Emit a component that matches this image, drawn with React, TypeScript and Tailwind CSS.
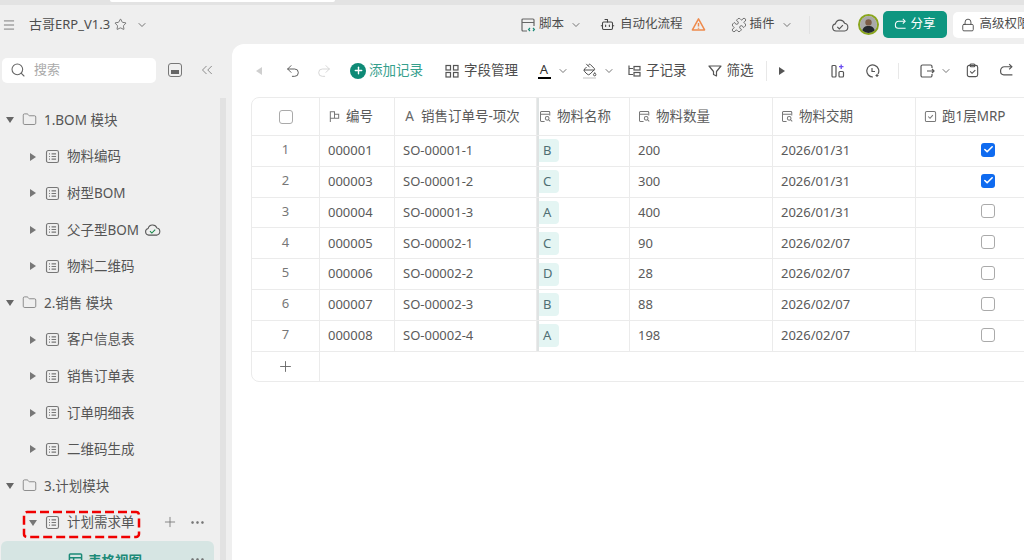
import type { ReactNode } from "react";
import {
  Bot,
  Check,
  ChevronDown,
  ChevronsLeft,
  Folder,
  Lock,
  Menu,
  MoreHorizontal,
  PaintBucket,
  Plus,
  Puzzle,
  Redo2,
  Search,
  Star,
  Undo2,
} from "lucide-react";

const FONT = "font-['Noto_Sans','Noto_Sans_CJK_SC',sans-serif]";

function Tri({ dir = "right", className = "" }: { dir?: "right" | "down" | "left"; className?: string }) {
  const points = dir === "right" ? "2,1 8,5 2,9" : dir === "down" ? "1,2 9,2 5,8" : "8,1 2,5 8,9";
  return (
    <svg viewBox="0 0 10 10" className={`size-[10px] shrink-0 fill-current ${className}`}>
      <polygon points={points} />
    </svg>
  );
}

function SheetIcon({ className = "" }: { className?: string }) {
  return (
    <svg viewBox="0 0 16 16" fill="none" stroke="currentColor" strokeWidth="1.2" className={`size-[15px] shrink-0 ${className}`}>
      <rect x="1.6" y="1.6" width="12.8" height="12.8" rx="2" />
      <path d="M4.3 5.2h1M4.3 8h1M4.3 10.8h1M7 5.2h4.8M7 8h4.8M7 10.8h4.8" />
    </svg>
  );
}

function LookupIcon() {
  return (
    <svg viewBox="0 0 14 14" fill="none" stroke="currentColor" strokeWidth="1.1" className="size-[13px] shrink-0 text-[#777]">
      <path d="M6 12.4H2.6a1 1 0 0 1-1-1V2.6a1 1 0 0 1 1-1h8a1 1 0 0 1 1 1V6" />
      <path d="M1.8 4.6h9.4" />
      <circle cx="8.8" cy="9" r="2" />
      <path d="M10.3 10.5l1.8 1.8" />
    </svg>
  );
}

function CloudCheck({ className = "", check = "#555" }: { className?: string; check?: string }) {
  return (
    <svg viewBox="0 0 18 16" fill="none" stroke="currentColor" strokeWidth="1.1" className={`shrink-0 ${className}`}>
      <path d="M5 14a3.6 3.6 0 0 1-.6-7.1 4.8 4.8 0 0 1 9.200-.6A3.900 3.900 0 0 1 13.500 14z" strokeLinejoin="round" />
      <path d="M6.300 9.800l2 2 3.600-3.600" stroke={check} strokeWidth="1.200" />
    </svg>
  );
}

function Chev({ className = "" }: { className?: string }) {
  return <ChevronDown className={`size-[12px] shrink-0 text-[#666] ${className}`} strokeWidth={1.8} />;
}

function ShareIcon({ className = "size-[13px]" }: { className?: string }) {
  return (
    <svg viewBox="0 0 14 14" fill="none" stroke="currentColor" strokeWidth="1.1" className={`shrink-0 ${className}`}>
      <path d="M11.500 3.500H5A3.500 3.500 0 0 0 1.500 7v1a3 3 0 0 0 3 3h8" />
      <path d="M9.500 1 12 3.500 9.500 6" />
    </svg>
  );
}

function TreeRow({ label, group, open, badge }: { label: string; group?: boolean; open?: boolean; badge?: boolean }) {
  return (
    <div className="flex h-[36.6px] items-center text-[13.5px] text-[#555]">
      {group ? (
        <>
          <Tri dir="down" className="ml-[5px] text-[#666]" />
          <Folder className="ml-[7px] size-[15px] shrink-0 text-[#777]" strokeWidth={1.3} />
          <span className="ml-[7px]">{label}</span>
        </>
      ) : (
        <>
          <Tri dir={open ? "down" : "right"} className="ml-[28px] text-[#777]" />
          <SheetIcon className="ml-[7px] text-[#777]" />
          <span className="ml-[7px]">{label}</span>
          {badge && <CloudCheck className="ml-[5px] h-[15px] w-[17px] text-[#555]" check="#1c8a4c" />}
        </>
      )}
    </div>
  );
}

function Sidebar() {
  return (
    <aside className="relative flex w-[232px] shrink-0 flex-col">
      <div className="flex h-[52px] shrink-0 items-center pl-[2px]">
        <div className="flex h-[25px] w-[154px] items-center rounded-[5px] bg-white pl-[8px] text-[13px] text-[#aaa]">
          <Search className="size-[16px] text-[#666]" strokeWidth={1.6} />
          <span className="ml-[8px]">搜索</span>
        </div>
        <span className="ml-[12px] flex size-[14px] items-end justify-center rounded-[3px] border border-[#777] pb-[2px]">
          <span className="h-[4px] w-[8px] bg-[#666]" />
        </span>
        <ChevronsLeft className="ml-[16px] size-[18px] text-[#777]" strokeWidth={1.1} />
      </div>
      <div className="shrink-0 pt-[5.7px]">
        <TreeRow group label="1.BOM 模块" />
        <TreeRow label="物料编码" />
        <TreeRow label="树型BOM" />
        <TreeRow label="父子型BOM" badge />
        <TreeRow label="物料二维码" />
        <TreeRow group label="2.销售 模块" />
        <TreeRow label="客户信息表" />
        <TreeRow label="销售订单表" />
        <TreeRow label="订单明细表" />
        <TreeRow label="二维码生成" />
        <TreeRow group label="3.计划模块" />
        <div className="relative">
          <TreeRow open label="计划需求单" />
          <svg width="119" height="29" className="absolute left-[22px] top-[6px] overflow-visible">
            <rect x="2" y="2" width="115" height="25" rx="3" fill="none" stroke="#f00000" strokeWidth="2.5" strokeDasharray="9 4" />
          </svg>
          <Plus className="absolute left-[162px] top-[10px] size-[16px] text-[#777]" strokeWidth={1.3} />
          <MoreHorizontal className="absolute left-[189px] top-[10px] size-[17px] text-[#666]" strokeWidth={1.5} />
        </div>
      </div>
      <div className="ml-[1px] flex h-[36px] w-[213px] shrink-0 items-start rounded-[6px] bg-[#d6e5e3] pl-[67px] pt-[10px] text-[13.5px] font-bold text-[#1c8a78]">
        <svg viewBox="0 0 16 16" fill="none" stroke="currentColor" strokeWidth="1.6" className="mt-[1px] size-[15px] shrink-0">
          <rect x="1.5" y="2" width="13" height="12" rx="1" />
          <path d="M1.5 6h13M6 6v8" />
        </svg>
        <span className="ml-[5px]">表格视图</span>
        <MoreHorizontal className="ml-[47px] size-[17px] text-[#666]" strokeWidth={1.5} />
      </div>
      <div className="absolute bottom-0 left-[220px] top-[54px] w-[6px] bg-[#e2e2e2]" />
    </aside>
  );
}

function ToolItem({ icon, label, className = "" }: { icon: ReactNode; label: string; className?: string }) {
  return (
    <span className={`flex items-center gap-[5px] whitespace-nowrap ${className}`}>
      {icon}
      <span>{label}</span>
    </span>
  );
}

function Header() {
  return (
    <header className="flex h-[39px] shrink-0 items-center whitespace-nowrap text-[12.5px] text-[#4d4d4d]">
      <Menu className="ml-[2px] size-[14px] shrink-0 text-[#666]" strokeWidth={1.4} />
      <span className="ml-[13px] w-[74px] shrink-0 text-[13px]">古哥ERP_V1.3</span>
      <Star className="ml-[11px] size-[13px] shrink-0 text-[#555]" strokeWidth={1.4} />
      <Chev className="ml-[9px]" />
      <span className="ml-[372px] flex shrink-0 items-center gap-[3px]">
        <svg viewBox="0 0 16 16" fill="none" stroke="currentColor" strokeWidth="1.2" className="size-[16px] text-[#666]">
          <path d="M7 14H3a1 1 0 0 1-1-1V3a1 1 0 0 1 1-1h10a1 1 0 0 1 1 1v6M2 5.5h12" />
          <path d="M10 11l-1.4 1.5L10 14M13 11l1.4 1.5L13 14" stroke="#1c8a78" />
        </svg>
        脚本
      </span>
      <Chev className="ml-[6px]" />
      <span className="ml-[18px] flex shrink-0 items-center gap-[5px]">
        <Bot className="size-[15px] text-[#444]" strokeWidth={1.7} />
        自动化流程
      </span>
      <svg viewBox="0 0 16 16" fill="none" stroke="#ee8a4c" strokeWidth="1.6" className="ml-[8px] size-[15px] shrink-0">
        <path d="M8 2 14.5 13.8h-13z" strokeLinejoin="round" />
        <path d="M8 6.5v3.6M8 11.4v1" />
      </svg>
      <span className="ml-[25px] flex shrink-0 items-center gap-[3px]">
        <Puzzle className="size-[16px] text-[#555]" strokeWidth={1.2} />
        插件
      </span>
      <Chev className="ml-[6px]" />
      <span className="ml-[16px] h-[18px] w-px shrink-0 bg-[#e2e2e2]" />
      <CloudCheck className="ml-[21px] h-[16px] w-[18px] text-[#555]" />
      <span className="ml-[9px] flex size-[21px] shrink-0 items-center justify-center overflow-hidden rounded-full border-2 border-[#8aa61e] bg-[#c9c9c9]">
        <svg viewBox="0 0 16 16" className="size-[17px]">
          <circle cx="8" cy="8" r="8" fill="#a9a9a9" />
          <circle cx="8" cy="6" r="3" fill="#7b5d48" />
          <path d="M2 16c0-5 2.5-6.5 6-6.5s6 1.5 6 6.5z" fill="#23282e" />
        </svg>
      </span>
      <span className="ml-[4px] flex h-[27px] w-[64px] shrink-0 items-center justify-center gap-[4px] rounded-[5px] bg-[#0e9680] text-white">
        <ShareIcon />
        分享
      </span>
      <span className="ml-[6px] flex h-[26px] w-[90px] shrink-0 items-center gap-[5px] overflow-hidden rounded-l-[5px] bg-white pl-[8px]">
        <Lock className="size-[14px] shrink-0 text-[#444]" strokeWidth={1.5} />
        高级权限
      </span>
    </header>
  );
}

function Toolbar() {
  return (
    <div className="flex h-[53px] shrink-0 items-center whitespace-nowrap text-[13.5px] text-[#4d4d4d]">
      <Tri dir="left" className="ml-[22px] text-[#cfcfcf]" />
      <Undo2 className="ml-[21px] size-[16px] text-[#555]" strokeWidth={1.4} />
      <Redo2 className="ml-[15px] size-[16px] text-[#d4d4d4]" strokeWidth={1.4} />
      <span className="ml-[18px] flex items-center gap-[3px] text-[#36a08d]">
        <span className="flex size-[16px] items-center justify-center rounded-full bg-[#0e8a76]">
          <Plus className="size-[11px] text-white" strokeWidth={3} />
        </span>
        添加记录
      </span>
      <ToolItem
        className="ml-[22px]"
        label="字段管理"
        icon={
          <svg viewBox="0 0 14 14" fill="none" stroke="currentColor" strokeWidth="1.2" className="size-[14px] text-[#555]">
            <rect x="1" y="1.5" width="4.5" height="4.5" />
            <rect x="8.5" y="1.5" width="4.5" height="4.5" />
            <rect x="1" y="8.5" width="4.5" height="4.5" />
            <rect x="8.5" y="8.5" width="4.5" height="4.5" />
          </svg>
        }
      />
      <span className="ml-[19px] flex w-[14px] flex-col items-center leading-none">
        <span className="text-[13px] leading-[13px] text-[#333]">A</span>
        <span className="mt-[1px] h-[2px] w-[13px] bg-black" />
      </span>
      <Chev className="ml-[6px]" />
      <span className="ml-[13px] flex w-[15px] flex-col items-center">
        <PaintBucket className="size-[14px] text-[#444]" strokeWidth={1.6} />
        <span className="h-[2px] w-[13px] bg-[#e0e0e0]" />
      </span>
      <Chev className="ml-[6px]" />
      <ToolItem
        className="ml-[12px]"
        label="子记录"
        icon={
          <svg viewBox="0 0 14 14" fill="none" stroke="currentColor" strokeWidth="1.2" className="size-[14px] text-[#555]">
            <path d="M2 1.5v9h4M2 4.5h4" />
            <rect x="7" y="2.5" width="6" height="3.5" />
            <rect x="7" y="8.5" width="6" height="3.5" />
          </svg>
        }
      />
      <ToolItem
        className="ml-[21px]"
        label="筛选"
        icon={
          <svg viewBox="0 0 14 14" fill="none" stroke="currentColor" strokeWidth="1.2" className="size-[14px] text-[#555]">
            <path d="M1 2h12L8.5 7.5V12L5.5 10.5v-3z" strokeLinejoin="round" />
          </svg>
        }
      />
      <span className="ml-[12px] h-[20px] w-px bg-[#e8e8e8]" />
      <Tri className="ml-[10px] text-[#555]" />
      <svg viewBox="0 0 16 16" fill="none" stroke="currentColor" strokeWidth="1.2" className="ml-[43px] size-[16px] text-[#555]">
        <rect x="2" y="2.5" width="4" height="11.5" rx="1" />
        <rect x="9" y="8.5" width="4.5" height="5.5" rx="1" />
        <path d="M11.2 1.5v4.5M9 3.7h4.5" stroke="#6a4cf0" strokeWidth="1.3" />
      </svg>
      <svg viewBox="0 0 16 16" fill="none" stroke="currentColor" strokeWidth="1.2" className="ml-[18px] size-[16px] text-[#555]">
        <path d="M9 14a6 6 0 1 1 5-3M8 5v3.5h3" />
        <path d="M13 11v3M11.5 12.5h3" />
      </svg>
      <span className="ml-[18px] h-[16px] w-px bg-[#e8e8e8]" />
      <svg viewBox="0 0 16 16" fill="none" stroke="currentColor" strokeWidth="1.2" className="ml-[20px] size-[16px] text-[#555]">
        <path d="M13 5V3.5A1.5 1.5 0 0 0 11.5 2h-8A1.5 1.5 0 0 0 2 3.500v9A1.500 1.500 0 0 0 3.500 14h8a1.500 1.500 0 0 0 1.500-1.500V11" />
        <path d="M8 8h7M13 6l2 2-2 2" />
      </svg>
      <Chev className="ml-[5px]" />
      <svg viewBox="0 0 16 16" fill="none" stroke="currentColor" strokeWidth="1.2" className="ml-[13px] size-[15px] text-[#555]">
        <rect x="2.5" y="2.5" width="11" height="12" rx="2" />
        <rect x="5.5" y="1" width="5" height="3" rx="1" />
        <path d="M5.5 9l2 2 3.500-3.500" />
      </svg>
      <ShareIcon className="ml-[19px] size-[15px] text-[#555]" />
    </div>
  );
}

const widths = "grid-cols-[68px_75px_142px_93px_143px_143px_120px]";

const rows = [
  ["1", "000001", "SO-00001-1", "B", "200", "2026/01/31", true],
  ["2", "000003", "SO-00001-2", "C", "300", "2026/01/31", true],
  ["3", "000004", "SO-00001-3", "A", "400", "2026/01/31", false],
  ["4", "000005", "SO-00002-1", "C", "90", "2026/02/07", false],
  ["5", "000006", "SO-00002-2", "D", "28", "2026/02/07", false],
  ["6", "000007", "SO-00002-3", "B", "88", "2026/02/07", false],
  ["7", "000008", "SO-00002-4", "A", "198", "2026/02/07", false],
] as const;

function Box({ checked }: { checked?: boolean }) {
  return checked ? (
    <span className="flex size-[14px] items-center justify-center rounded-[3px] bg-[#0f6bf0]">
      <Check className="size-[11px] text-white" strokeWidth={3.5} />
    </span>
  ) : (
    <span className="size-[14px] rounded-[3px] border-[1.5px] border-[#aaa] bg-white" />
  );
}

function HeadCell({ icon, label, className = "pl-[8px]" }: { icon: ReactNode; label: string; className?: string }) {
  return (
    <div className={`flex items-center gap-[5px] overflow-hidden whitespace-nowrap border-r border-[#ebebeb] text-[13.5px] ${className}`}>
      {icon}
      <span>{label}</span>
    </div>
  );
}

function Table() {
  return (
    <div className="ml-[19px] w-[800px] overflow-hidden rounded-[8px] border border-[#ebebeb] text-[13px] text-[#5a5a5a]">
      <div className={`grid h-[38px] ${widths} border-b border-[#ebebeb]`}>
        <div className="flex items-center justify-center border-r border-[#ebebeb]">
          <Box />
        </div>
        <HeadCell
          label="编号"
          icon={
            <svg viewBox="0 0 14 14" fill="none" stroke="currentColor" strokeWidth="1.1" className="size-[13px] shrink-0 text-[#777]">
              <path d="M2.5 13V2h4.5v7h-4.5M7 4.5h4.5V9H7" />
            </svg>
          }
        />
        <HeadCell label="销售订单号-项次" icon={<span className="w-[13px] shrink-0 text-center text-[#666]">A</span>} />
        <HeadCell className="gap-[3px] border-l-2 border-l-[#dfe3e3]" label="物料名称" icon={<LookupIcon />} />
        <HeadCell label="物料数量" icon={<LookupIcon />} />
        <HeadCell label="物料交期" icon={<LookupIcon />} />
        <HeadCell
          label="跑1层MRP"
          icon={
            <svg viewBox="0 0 14 14" fill="none" stroke="currentColor" strokeWidth="1.1" className="size-[13px] shrink-0 text-[#777]">
              <rect x="1.5" y="1.5" width="11" height="11" rx="1.5" />
              <path d="M4.5 7l2 2 3-3.5" />
            </svg>
          }
        />
      </div>
      {rows.map(([no, code, order, item, qty, date, checked]) => (
        <div key={no} className={`grid h-[30.8px] ${widths} border-b border-[#ebebeb]`}>
          <div className="flex items-center justify-center border-r border-[#ebebeb] pb-[2px] text-[#777]">{no}</div>
          <div className="flex items-center border-r border-[#ebebeb] pl-[8px]">{code}</div>
          <div className="flex items-center border-r border-[#ebebeb] pl-[8px]">{order}</div>
          <div className="flex items-center border-r border-l-2 border-r-[#ebebeb] border-l-[#dfe3e3]">
            <span className="flex h-[23px] w-[20px] items-center rounded-r-[4px] bg-[#e4f5f3] pl-[4px] text-[#4f6f73]">{item}</span>
          </div>
          <div className="flex items-center border-r border-[#ebebeb] pl-[8px]">{qty}</div>
          <div className="flex items-center border-r border-[#ebebeb] pl-[8px]">{date}</div>
          <div className="flex items-center pb-[2px] pl-[65px]">
            <Box checked={checked} />
          </div>
        </div>
      ))}
      <div className="flex h-[29px]">
        <div className="flex w-[68px] items-center justify-center border-r border-[#ebebeb]">
          <Plus className="size-[17px] text-[#666]" strokeWidth={1.3} />
        </div>
      </div>
    </div>
  );
}

export default function App() {
  return (
    <div className={`flex h-[560px] w-[1024px] flex-col overflow-hidden bg-[#efefef] ${FONT}`}>
      <div className="flex h-[5px] shrink-0 bg-[#e3e3e3]">
        <span className="ml-[110px] h-[2px] w-[225px] rounded-b-[2px] bg-white" />
      </div>
      <Header />
      <div className="flex min-h-0 flex-1">
        <Sidebar />
        <main className="min-w-0 flex-1 overflow-hidden rounded-tl-[12px] bg-white">
          <Toolbar />
          <Table />
        </main>
      </div>
    </div>
  );
}
